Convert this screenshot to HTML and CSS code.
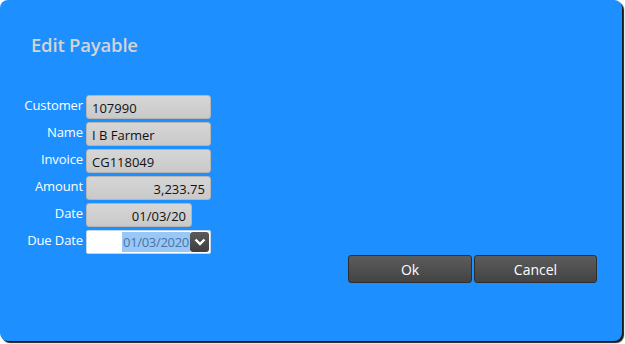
FILE: index.html
```html
<!DOCTYPE html>
<html lang="en">
<head>
    <meta charset="UTF-8">
    <title>Edit Payable</title>
    <link rel="stylesheet" href="styles.css">
</head>
<body>
    <div class="window">
        <h1 class="title">Edit Payable</h1>
        <div class="form">
            <label>Customer</label>
            <div class="field">107990</div>
            <label>Name</label>
            <div class="field">I B Farmer</div>
            <label>Invoice</label>
            <div class="field">CG118049</div>
            <label>Amount</label>
            <div class="field num">3,233.75</div>
            <label>Date</label>
            <div class="field num short">01/03/20</div>
            <label>Due Date</label>
            <div class="picker">
                <span class="sel">01/03/2020</span>
                <span class="drop">
                    <svg width="12" height="8" viewBox="0 0 12 8"><path d="M1.5 1.5 L6 6 L10.5 1.5" fill="none" stroke="#fff" stroke-width="2.4"/></svg>
                </span>
            </div>
        </div>
        <div class="buttons">
            <button class="btn">Ok</button>
            <button class="btn cancel">Cancel</button>
        </div>
    </div>
</body>
</html>
```

FILE: styles.css
```css
* {
    margin: 0;
    padding: 0;
    box-sizing: border-box;
}

body {
    background: #fff;
    font-family: 'Open Sans', 'Noto Sans', sans-serif;
    width: 625px;
    height: 344px;
    overflow: hidden;
}

.window {
    width: 622px;
    height: 341px;
    background: #1e8fff;
    border-radius: 8px;
    box-shadow: 2px 2px 1px #1a1a1a;
    padding: 33px 0 0 0;
}

.title {
    font-size: 18.5px;
    font-weight: 600;
    color: #d3d3d3;
    margin-left: 31px;
    line-height: 24px;
    letter-spacing: -0.2px;
}

.form {
    display: grid;
    grid-template-columns: 83px 125px;
    grid-auto-rows: 24px;
    column-gap: 3px;
    row-gap: 3px;
    margin-top: 38px;
}

.form label {
    color: #fff;
    font-size: 13px;
    text-align: right;
    line-height: 20px;
    letter-spacing: -0.1px;
}

.field {
    background: linear-gradient(#d6d6d6, #c9c9c9);
    border: 1px solid #b5b5b5;
    border-radius: 3px;
    font-size: 13px;
    color: #111;
    line-height: 22px;
    padding: 1px 5px 0 5px;
}

.field.num {
    text-align: right;
}

.field.short {
    width: 106px;
}

.picker {
    background: #fff;
    border: 1px solid #c3d6ea;
    border-radius: 2px;
    display: flex;
    justify-content: flex-end;
    align-items: center;
    padding-right: 1px;
}

.sel {
    background: #99c8f6;
    color: #4a74a8;
    font-size: 13px;
    line-height: 20px;
    letter-spacing: -0.3px;
    padding: 0 1px;
}

.drop {
    width: 19px;
    height: 20px;
    background: linear-gradient(#5a5a5a, #3e3e3e);
    border-radius: 3px;
    display: flex;
    justify-content: center;
    align-items: center;
}

.buttons {
    display: flex;
    justify-content: flex-end;
    gap: 2px;
    margin-top: 1px;
    padding-right: 25px;
}

.btn {
    width: 124px;
    height: 28px;
    background: linear-gradient(#5c5c5c, #434343);
    border: 1px solid #2e2e2e;
    border-radius: 3px;
    color: #fff;
    font-family: inherit;
    font-size: 14px;
}

.btn.cancel {
    width: 123px;
}
```
